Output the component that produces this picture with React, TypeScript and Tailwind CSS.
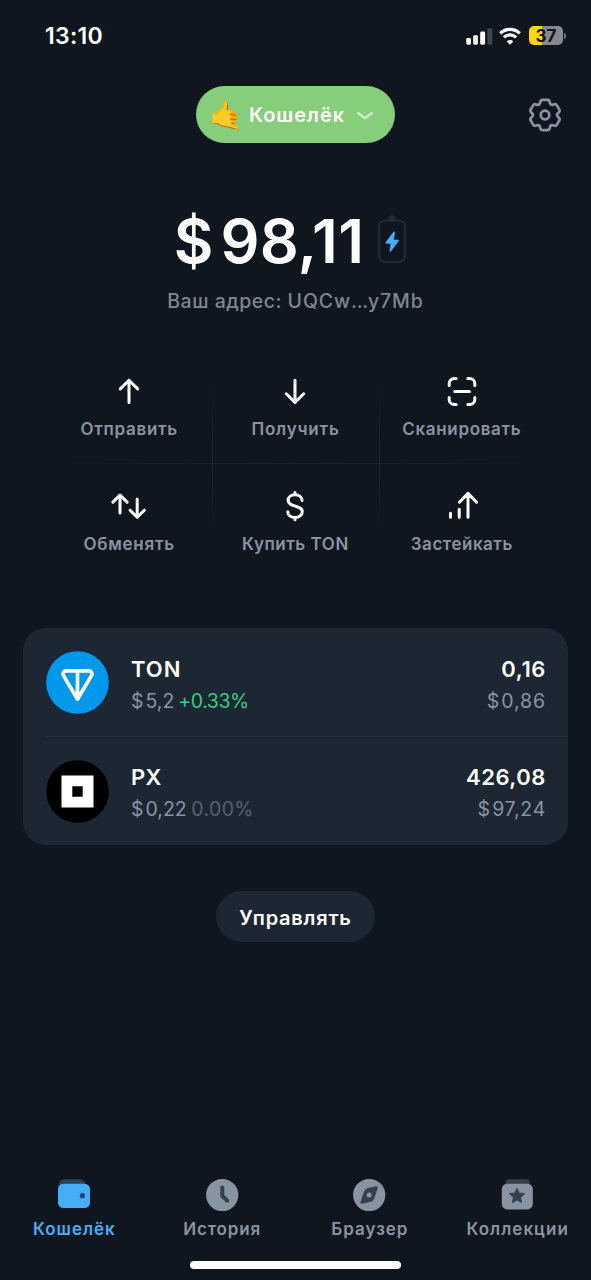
import type { ReactNode } from "react";

type StrokeIconProps = {
  d: string;
};

function StrokeIcon({ d }: StrokeIconProps) {
  return (
    <svg
      className="h-9 w-9 shrink-0"
      viewBox="0 0 36 36"
      fill="none"
      stroke="currentColor"
      strokeWidth="3"
      strokeLinecap="round"
      strokeLinejoin="round"
    >
      <path d={d} />
    </svg>
  );
}

const actions = [
  { label: "Отправить", className: "tracking-[0.72px]", icon: "M18 7.2v22.3M9.3 15.9 18 7.2l8.7 8.7" },
  { label: "Получить", className: "tracking-[0.82px]", icon: "M18 7.2v22.3M9.3 20.8l8.7 8.7 8.7-8.7" },
  {
    label: "Сканировать",
    className: "tracking-[0.66px]",
    icon: "M5.2 12.5v-2a5 5 0 0 1 5-5h2M23.8 5.5h2a5 5 0 0 1 5 5v2M30.8 24.5v2a5 5 0 0 1-5 5h-2M12.2 31.5h-2a5 5 0 0 1-5-5v-2M10.8 18.5h14.6",
  },
  {
    label: "Обменять",
    className: "tracking-[0.74px]",
    icon: "M9 7v18M1.9 14.1 9 7l7.1 7.1M26.2 11v18.3M19.1 22.2l7.1 7.1 7.1-7.1",
  },
  {
    label: "Купить TON",
    className: "tracking-[0.55px]",
    icon: "M25 12.5c0-3.4-3.1-5.7-7-5.7s-6.9 2.2-6.9 5.5c0 7.5 14.2 4.1 14.2 11.5 0 3.3-3.3 5.6-7.3 5.6s-7.2-2.3-7.2-5.7M18 4.4v2.4M18 29.4v2.3",
  },
  {
    label: "Застейкать",
    className: "tracking-[0.52px]",
    icon: "M6.5 25.2v4M15.2 21.2v8M24 5.8v23.4M15.4 14.2 24 5.4l8.6 8.8",
  },
];

function StatusBar() {
  return (
    <div className="flex h-[71px] items-center justify-between pr-[26px] pl-[45px] text-white">
      <span className="text-[23px] leading-7 font-semibold tracking-[0.27px]">13:10</span>
      <div className="flex items-center">
        <svg className="h-[18px] w-[27px]" viewBox="0 0 27 18">
          <rect x="0.3" y="11" width="4.7" height="6.7" rx="1.4" fill="#fff" />
          <rect x="7.2" y="8.2" width="4.7" height="9.5" rx="1.4" fill="#fff" />
          <rect x="14.2" y="4.6" width="4.9" height="13.1" rx="1.4" fill="#fff" />
          <rect x="21.4" y="1.2" width="4.9" height="16.5" rx="1.4" fill="#41464d" />
        </svg>
        <svg className="ml-[6px] h-[18px] w-[22px]" viewBox="0 0 22 18" fill="none" stroke="#fff">
          <path d="M1.2 6.4a14 14 0 0 1 19.6 0" strokeWidth="3.3" />
          <path d="M4.9 10.4a8.7 8.7 0 0 1 12.2 0" strokeWidth="3.2" />
          <path d="M11 17.8 7.7 14.4q3.3-2.7 6.6 0z" fill="#fff" stroke="none" />
        </svg>
        <div className="ml-[8px] flex h-[19px] w-[34px] items-center justify-center rounded-[5px] bg-linear-to-r from-[#ffd60a] from-37% to-[#87898e] to-37%">
          <span className="pt-px text-[17px] leading-[19px] font-bold text-[#10161f]">37</span>
        </div>
        <div className="-mr-[1px] ml-[1px] h-[6px] w-[2px] rounded-r-full bg-[#6f7277]" />
      </div>
    </div>
  );
}

function GearIcon() {
  return (
    <svg
      className="h-[34px] w-[34px]"
      viewBox="-17 -17 34 34"
      fill="none"
      stroke="#8994a3"
      strokeWidth="2.7"
      strokeLinecap="round"
    >
      {[0, 60, 120, 180, 240, 300].map((angle) => (
        <path
          key={angle}
          transform={`rotate(${angle})`}
          d="M-6-10.4Q-4.9-11.1-4.7-12.9Q-4.4-15.1-2.4-15.1H2.4Q4.4-15.1 4.7-12.9Q4.900-11.100 6-10.400"
        />
      ))}
      <circle r="4.3" />
    </svg>
  );
}

function Header() {
  return (
    <header className="mt-[15px] grid h-[57px] grid-cols-[1fr_auto_1fr] items-center">
      <button className="col-start-2 flex h-[57px] w-[199px] items-center rounded-full bg-[#86cd7c] pl-[13px] text-white">
        <span className="w-[35px] text-[28px] leading-none">🤙</span>
        <span className="ml-[5px] pt-px text-[20px] leading-7 font-semibold tracking-[0.96px]">Кошелёк</span>
        <svg
          className="mt-[2px] ml-[11px] h-[10px] w-[18px]"
          viewBox="0 0 18 10"
          fill="none"
          stroke="#d5eed1"
          strokeWidth="2.2"
          strokeLinecap="round"
          strokeLinejoin="round"
        >
          <path d="m2 2 7 5.2L16 2" />
        </svg>
      </button>
      <button className="mr-[29px] justify-self-end">
        <GearIcon />
      </button>
    </header>
  );
}

function Balance() {
  return (
    <section className="mt-[66px] flex flex-col items-center">
      <div className="flex h-16 items-start pr-[10px] text-[61px] leading-[64px] font-semibold text-white">
        <span>$</span>
        <span className="ml-[7px] tracking-[0.31px]">98,11</span>
        <svg className="mt-[6px] ml-[13px] h-[50px] w-[30px]" viewBox="0 0 30 50" fill="none">
          <path d="M11 4.5a4 4 0 0 1 8 0z" fill="#222a35" />
          <rect x="2" y="5.5" width="26" height="41.5" rx="6" stroke="#222a35" strokeWidth="2" />
          <path
            d="M16.6 17.2 9 27.3c-.4.6-.1 1 .5 1h4.6l-1.200 7.400c-.1.8.6 1 1 .4l7.400-10c.4-.6.1-1-.5-1h-4.400l1.200-7.500c.1-.8-.6-1-1-.4z"
            fill="#45aef5"
            stroke="#45aef5"
            strokeWidth="0.8"
          />
        </svg>
      </div>
      <p className="mt-[14px] text-[19.5px] leading-7 font-medium text-[#7d8693]">
        <span className="tracking-[0.5px]">Ваш адрес: </span>
        <span className="tracking-[0.9px]">UQCw</span>
        <span className="tracking-[-0.3px]">...</span>
        <span className="tracking-[0.9px]">y7Mb</span>
      </p>
    </section>
  );
}

function Actions() {
  return (
    <section className="relative mx-[46px] mt-[34px] grid grid-cols-3">
      {actions.map(({ label, className, icon }) => (
        <button key={label} className="flex h-[114.5px] flex-col items-center pt-6 text-white">
          <StrokeIcon d={icon} />
          <span className={`mt-[8px] text-[17px] leading-6 font-semibold whitespace-nowrap text-[#8994a3] ${className}`}>
            {label}
          </span>
        </button>
      ))}
      {/* faded separators between the buttons */}
      <div className="absolute top-[114px] left-0 h-px w-full bg-linear-to-r from-transparent via-[#1c232c] to-transparent" />
      <div className="absolute top-[30px] left-1/3 h-[160px] w-px bg-linear-to-b from-transparent via-[#1c232c] to-transparent" />
      <div className="absolute top-[30px] left-2/3 h-[160px] w-px bg-linear-to-b from-transparent via-[#1c232c] to-transparent" />
    </section>
  );
}

type TokenRowProps = {
  icon: ReactNode;
  name: ReactNode;
  price: ReactNode;
  amount: ReactNode;
  value: ReactNode;
};

function TokenRow({ icon, name, price, amount, value }: TokenRowProps) {
  return (
    <div className="flex h-[108.5px] pt-[23px] pr-[23px]">
      {icon}
      <div className="ml-[22.5px] flex-1 pt-[2.5px]">
        <p className="text-[22px] leading-[31px] font-semibold text-white">{name}</p>
        <p className="text-[19.5px] leading-[33px] text-[#8994a3]">{price}</p>
      </div>
      <div className="pt-[2.5px] text-right">
        <p className="text-[22px] leading-[31px] font-semibold text-white">{amount}</p>
        <p className="text-[19.5px] leading-[33px] text-[#8994a3]">{value}</p>
      </div>
    </div>
  );
}

function Tokens() {
  return (
    <section className="mx-[23px] mt-[50px] rounded-[23px] bg-[#1d2633] pl-[22.5px]">
      <TokenRow
        icon={
          <svg className="h-[63px] w-[63px]" viewBox="0 0 63 63" fill="none">
            <circle cx="31.5" cy="31.5" r="31.3" fill="#0098ea" />
            <path
              d="M31.5 48.3 17.4 24.4a3 3 0 0 1 2.6-4.5h23a3 3 0 0 1 2.6 4.5zM31.5 20v27"
              stroke="#fff"
              strokeWidth="3.7"
              strokeLinejoin="round"
            />
          </svg>
        }
        name={<span className="tracking-[1px]">TON</span>}
        price={
          <>
            $<span className="ml-[2px]">5,2</span>
            <span className="ml-[4px] tracking-[-0.45px] text-[#39cc83]">+0.33%</span>
          </>
        }
        amount={<span className="-mr-px tracking-[0.6px]">0,16</span>}
        value={
          <>
            $<span className="-mr-[1px] ml-[2px] tracking-[0.9px]">0,86</span>
          </>
        }
      />
      <div className="-mt-px h-px bg-[#242d3a]" />
      <TokenRow
        icon={
          <svg className="h-[63px] w-[63px]" viewBox="0 0 63 63">
            <circle cx="31.5" cy="31.5" r="31.3" fill="#000" />
            <path d="M15.5 15.5h32v32h-32zM26.3 26.3v10.4h10.4V26.3z" fill="#fff" fillRule="evenodd" />
          </svg>
        }
        name={<span className="tracking-[0.31px]">PX</span>}
        price={
          <>
            $<span className="ml-[2px]">0,22</span>
            <span className="ml-[4.5px] tracking-[0.4px] text-[#556170]">0.00%</span>
          </>
        }
        amount={<span className="-mr-px tracking-[0.55px]">426,08</span>}
        value={
          <>
            $<span className="-mr-[1px] ml-[2px] tracking-[0.75px]">97,24</span>
          </>
        }
      />
    </section>
  );
}

type TabProps = {
  label: string;
  className: string;
  children: ReactNode;
};

function Tab({ label, className, children }: TabProps) {
  return (
    <button className={`flex flex-1 flex-col items-center ${className}`}>
      <svg className="h-9 w-9" viewBox="0 0 36 36">
        {children}
      </svg>
      <span className="mt-[4.5px] pl-px text-[17px] leading-[22px] font-semibold whitespace-nowrap">{label}</span>
    </button>
  );
}

function TabBar() {
  return (
    <nav className="mt-auto flex h-[103px]">
      <Tab label="Кошелёк" className="tracking-[0.96px] text-[#45aef5]">
        <path d="M2.7 12V8a5.7 5.7 0 0 1 5.7-5.7h15A6.5 6.5 0 0 1 29.8 8z" fill="#28445f" />
        <rect x="2" y="6.7" width="32" height="24.3" rx="5.5" fill="#45aef5" />
        <circle cx="26.4" cy="18.7" r="2.6" fill="#1f4666" />
      </Tab>
      <Tab label="История" className="tracking-[0.83px] text-[#8994a3]">
        <circle cx="18.2" cy="18" r="16.1" fill="#8994a3" />
        <path
          d="M18.3 10.5V19l5 4.7"
          fill="none"
          stroke="#363f4c"
          strokeWidth="4"
          strokeLinecap="round"
          strokeLinejoin="round"
        />
      </Tab>
      <Tab label="Браузер" className="tracking-[0.97px] text-[#8994a3]">
        <circle cx="18.2" cy="18" r="16.1" fill="#8994a3" />
        <path
          d="m24.9 9.3-8.6 2q-2.5.7-3.3 3.1L9.5 24.9q-.6 2.3 1.7 1.9l8.7-2q2.5-.7 3.3-3.1l3.5-10.5q.5-2.3-1.8-1.9z"
          fill="#363f4c"
        />
        <circle cx="18.1" cy="18" r="2.5" fill="#8994a3" />
      </Tab>
      <Tab label="Коллекции" className="tracking-[1.03px] text-[#8994a3]">
        <path d="M6.6 8V5.5a3.2 3.2 0 0 1 3.2-3.2h17.8a3.2 3.2 0 0 1 3.2 3.2V8z" fill="#363f4c" />
        <rect x="2.8" y="6.7" width="31" height="25.7" rx="5.5" fill="#8994a3" />
        <path
          d="m18 11.5 2.1 4.6 5.1.6-3.8 3.5 1 5-4.4-2.5-4.4 2.5 1-5-3.8-3.5 5.1-.6z"
          fill="#363f4c"
          stroke="#363f4c"
          strokeWidth="1.2"
          strokeLinejoin="round"
        />
      </Tab>
    </nav>
  );
}

export default function App() {
  return (
    <div className="relative flex h-[1280px] w-[591px] flex-col overflow-hidden bg-[#10161f] font-['Inter',sans-serif]">
      <StatusBar />
      <Header />
      <Balance />
      <Actions />
      <Tokens />
      <button className="mt-[46px] h-[51px] w-[159px] self-center rounded-full bg-[#1d2633] pt-[2px] text-[20px] font-semibold tracking-[0.78px] text-white">
        Управлять
      </button>
      <TabBar />
      <div className="absolute top-[1261px] left-[190px] h-[8px] w-[211px] rounded-full bg-white" />
    </div>
  );
}
